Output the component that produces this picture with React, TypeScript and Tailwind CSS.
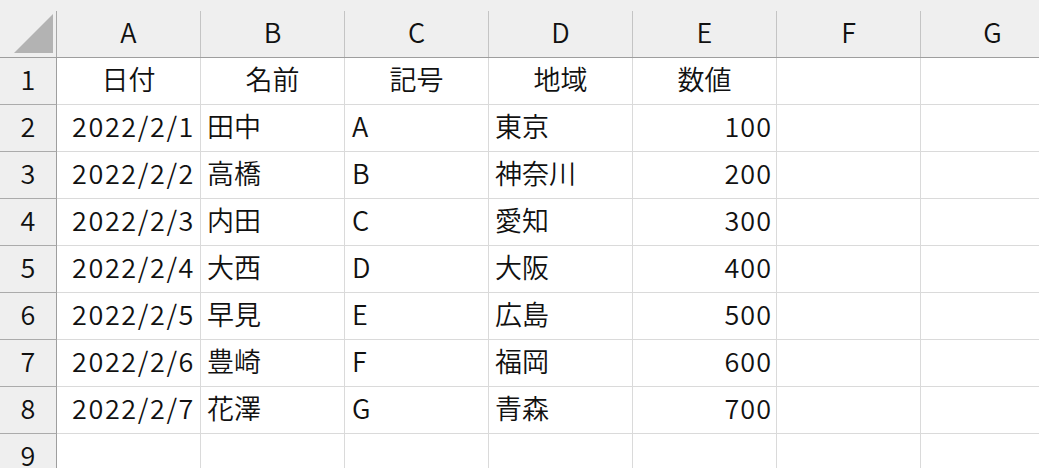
import React from "react";

const cols = ["A", "B", "C", "D", "E", "F", "G"];
const data: [string, string, string, string, string][] = [
  ["2022/2/1", "田中", "A", "東京", "100"],
  ["2022/2/2", "高橋", "B", "神奈川", "200"],
  ["2022/2/3", "内田", "C", "愛知", "300"],
  ["2022/2/4", "大西", "D", "大阪", "400"],
  ["2022/2/5", "早見", "E", "広島", "500"],
  ["2022/2/6", "豊崎", "F", "福岡", "600"],
  ["2022/2/7", "花澤", "G", "青森", "700"],
];

const cell = "h-[47px] pb-[6px] border-r border-b border-[#dadada] flex items-center overflow-hidden whitespace-nowrap";

function RowHead({ n }: { n: number }) {
  return (
    <div className="h-[47px] pb-[6px] bg-[#efefef] border-r border-b border-r-[#9e9e9e] border-b-[#ababab] flex items-center justify-center">
      {n}
    </div>
  );
}

export default function App() {
  return (
    <div
      className="w-[1039px] h-[468px] overflow-hidden bg-white text-[#111] text-[27px] leading-none font-[350]"
      style={{ fontFamily: '"Noto Sans CJK JP", "Noto Sans", sans-serif' }}
    >
      <div className="grid grid-cols-[57px_repeat(7,144px)] w-[1065px]">
        {/* corner */}
        <div className="h-[58px] bg-[#efefef] border-b border-[#9e9e9e] pt-[11px]">
          <div className="h-full border-r border-[#a8a8a8] relative">
            <svg className="absolute left-[14px] top-[3px]" width="40" height="40" viewBox="0 0 40 40">
              <polygon points="39,0 39,39 0,39" fill="#b3b3b3" />
            </svg>
          </div>
        </div>
        {cols.map((c) => (
          <div key={c} className="h-[58px] bg-[#efefef] border-b border-[#9e9e9e] pt-[11px]">
            <div className="h-full border-r border-[#c4c4c4] flex items-center justify-center pb-[6px]">{c}</div>
          </div>
        ))}

        {/* row 1 */}
        <RowHead n={1} />
        {["日付", "名前", "記号", "地域", "数値"].map((t) => (
          <div key={t} className={`${cell} justify-center`}>{t}</div>
        ))}
        <div className={cell}></div>
        <div className={cell}></div>

        {data.map((r, i) => (
          <React.Fragment key={i}>
            <RowHead n={i + 2} />
            <div className={`${cell} justify-end pr-[5px] tracking-[1.6px]`}>{r[0]}</div>
            <div className={`${cell} pl-[6px]`}>{r[1]}</div>
            <div className={`${cell} pl-[7px]`}>{r[2]}</div>
            <div className={`${cell} pl-[6px]`}>{r[3]}</div>
            <div className={`${cell} justify-end pr-[4px] tracking-[1px]`}>{r[4]}</div>
            <div className={cell}></div>
            <div className={cell}></div>
          </React.Fragment>
        ))}

        <RowHead n={9} />
        {cols.map((c) => (
          <div key={c} className={cell}></div>
        ))}
      </div>
    </div>
  );
}
